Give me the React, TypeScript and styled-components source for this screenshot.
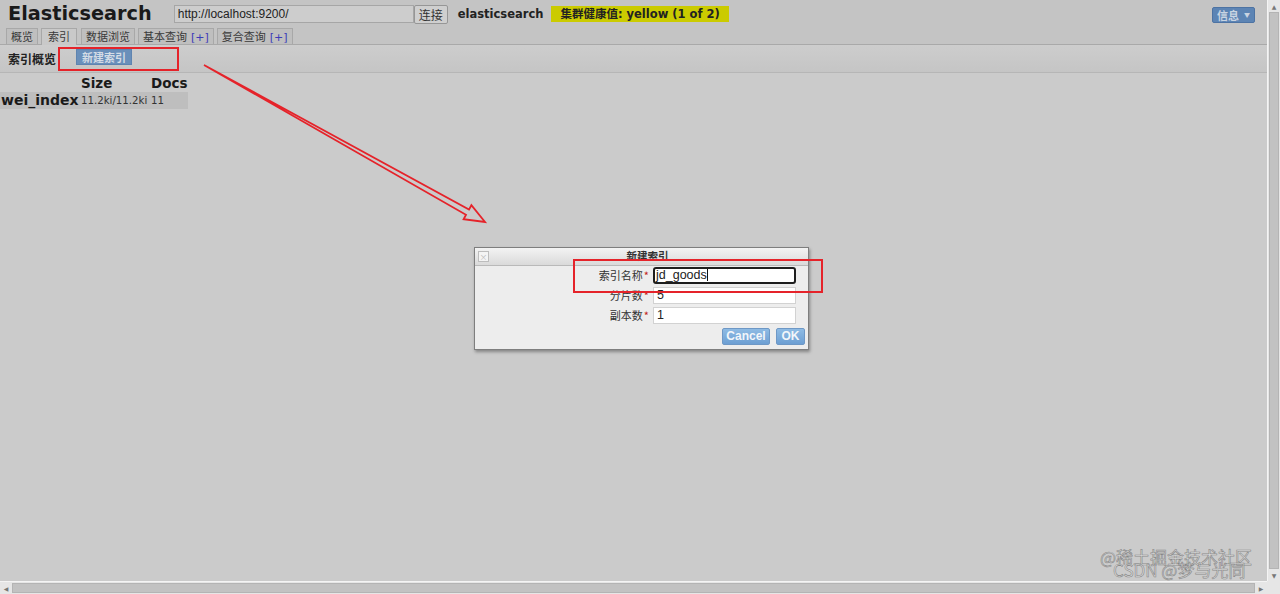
import React from "react";
import styled, { createGlobalStyle } from "styled-components";

const Global = createGlobalStyle`
  html, body { margin: 0; padding: 0; width: 1280px; height: 594px; overflow: hidden; background: #cbcbcb; }
  #root { width: 1280px; height: 594px; }
  * { box-sizing: border-box; }
`;

const Viewport = styled.div`
  position: relative;
  width: 1280px;
  height: 594px;
  display: grid;
  grid-template-columns: 1fr 13px;
  grid-template-rows: 1fr 13px;
  font-family: "DejaVu Sans", Verdana, sans-serif;
  color: #222;
  overflow: hidden;
`;

const Page = styled.div`
  background: #cbcbcb;
  overflow: hidden;
  display: flex;
  flex-direction: column;
`;

const Header = styled.header`
  background: #c4c4c4;
  border-bottom: 1px solid #a9a9a9;
  display: flex;
  flex-direction: column;
  height: 45px;
`;

const TopRow = styled.div`
  height: 28px;
  display: flex;
  align-items: center;
  padding-left: 8px;
  padding-right: 12px;
`;

const Title = styled.h1`
  margin: 0;
  font-size: 19.3px;
  font-weight: bold;
  color: #1a1a1a;
  line-height: 1;
`;

const UrlInput = styled.div`
  margin-left: 22px;
  width: 240px;
  height: 18px;
  background: #cdcdcd;
  border: 1px solid #a6a6a6;
  font-family: "Liberation Sans", Arial, sans-serif;
  font-size: 12px;
  color: #222;
  padding: 1px 3px;
  line-height: 15px;
`;

const ConnectButton = styled.div`
  width: 34px;
  height: 19px;
  background: #cfcfcf;
  border: 1px solid #969696;
  border-radius: 2px;
  font-size: 12px;
  line-height: 17px;
  text-align: center;
  color: #333;
  font-family: "Noto Sans CJK SC", sans-serif;
`;

const ClusterName = styled.span`
  margin-left: 10px;
  font-size: 11.5px;
  font-weight: bold;
  color: #222;
`;

const Health = styled.span`
  margin-left: 8px;
  background: #cbcb00;
  padding: 0 9px;
  height: 16px;
  line-height: 16px;
  font-size: 11.5px;
  font-weight: bold;
  color: #222;
  font-family: "DejaVu Sans", "Noto Sans CJK SC", sans-serif;
`;

const InfoButton = styled.div`
  margin-left: auto;
  margin-top: 2px;
  width: 43px;
  height: 16px;
  background: #5c84b4;
  border: 1px solid #4d73a3;
  border-radius: 2px;
  color: #c9d4e2;
  font-size: 11px;
  font-weight: bold;
  font-family: "Noto Sans CJK SC", sans-serif;
  display: flex;
  align-items: center;
  justify-content: center;
  gap: 5px;
  line-height: 1;
`;

const Caret = styled.span`
  font-size: 6px;
`;

const Tabs = styled.nav`
  display: flex;
  align-items: flex-end;
  gap: 2px;
  padding-left: 6px;
  height: 16px;
  margin-top: auto;
`;

const Tab = styled.div<{ $active?: boolean }>`
  height: ${(p) => (p.$active ? 17 : 16)}px;
  margin-bottom: ${(p) => (p.$active ? -1 : 0)}px;
  padding: 0 ${(p) => (p.$active ? 6 : 4)}px;
  margin-right: ${(p) => (p.$active ? 2 : 1)}px;
  background: ${(p) => (p.$active ? "#c9c9c9" : "#bfbfbf")};
  border: 1px solid #a8a8a8;
  border-bottom: none;
  font-size: 11px;
  line-height: 15px;
  color: #3a3a3a;
  font-family: "Noto Sans CJK SC", sans-serif;
  white-space: nowrap;
`;

const Plus = styled.span`
  color: #3b3bb8;
  font-family: "DejaVu Sans", sans-serif;
  font-size: 11px;
  margin-left: 4px;
`;

const Toolbar = styled.div`
  height: 28px;
  background: linear-gradient(#cdcdcd, #c5c5c5);
  border-bottom: 1px solid #b6b6b6;
  display: flex;
  align-items: center;
  padding-left: 8px;
`;

const ToolbarTitle = styled.span`
  font-size: 12px;
  font-weight: bold;
  font-family: "Noto Sans CJK SC", sans-serif;
  color: #222;
  margin-top: -1px;
`;

const BlueButton = styled.div`
  margin-left: 20px;
  margin-top: -4px;
  width: 56px;
  height: 16px;
  background: #6a8fba;
  border: 1px solid #5f84b0;
  color: #d4dce6;
  font-size: 11px;
  font-weight: bold;
  font-family: "Noto Sans CJK SC", sans-serif;
  text-align: center;
  line-height: 14px;
`;

const IndexTable = styled.table`
  border-collapse: collapse;
  margin-top: 2px;
  width: 188px;
`;

const Th = styled.th<{ $w: number }>`
  width: ${(p) => p.$w}px;
  text-align: left;
  font-size: 13.5px;
  font-weight: bold;
  padding: 0 0 0 1px;
  height: 17px;
  line-height: 17px;
  color: #1a1a1a;
`;

const Row = styled.tr`
  background: #bebebe;
`;

const NameCell = styled.td`
  font-size: 14px;
  font-weight: bold;
  padding: 0 0 0 1px;
  height: 17px;
  line-height: 17px;
  color: #1a1a1a;
`;

const SmallCell = styled.td`
  font-size: 10.2px;
  padding: 0 0 0 1px;
  color: #333;
  white-space: nowrap;
  vertical-align: middle;
`;

const Modal = styled.div`
  position: absolute;
  left: 474px;
  top: 247px;
  width: 335px;
  height: 103px;
  background: #ededed;
  border: 1px solid #7e7e7e;
  box-shadow: 1px 2px 3px rgba(0, 0, 0, 0.35);
  display: flex;
  flex-direction: column;
`;

const ModalTitle = styled.div`
  height: 18px;
  background: linear-gradient(#f3f3f3, #dadada);
  border-bottom: 1px solid #b9b9b9;
  display: flex;
  align-items: center;
  justify-content: center;
  position: relative;
  padding-left: 12px;
  font-size: 10.5px;
  font-weight: bold;
  font-family: "Noto Sans CJK SC", sans-serif;
  color: #333;
  line-height: 1;
`;

const CloseBox = styled.span`
  position: absolute;
  left: 3px;
  top: 3px;
  width: 11px;
  height: 11px;
  border: 1px solid #bdbdbd;
  background: #f4f4f4;
  color: #bbb;
  font-size: 8px;
  line-height: 9px;
  text-align: center;
  font-weight: normal;
`;

const Form = styled.div`
  display: grid;
  grid-template-columns: 174px 143px;
  column-gap: 4px;
  row-gap: 3px;
  padding-top: 1px;
`;

const Label = styled.label`
  text-align: right;
  font-size: 11px;
  font-family: "Noto Sans CJK SC", sans-serif;
  color: #333;
  line-height: 17px;
  height: 17px;
`;

const Star = styled.span`
  color: #c02020;
  margin-left: 1px;
`;

const Field = styled.div<{ $focus?: boolean }>`
  height: 17px;
  background: #fff;
  border: ${(p) => (p.$focus ? "2px solid #1e1e1e" : "1px solid #d2d2d2")};
  border-radius: ${(p) => (p.$focus ? 3 : 0)}px;
  font-family: "Liberation Sans", Arial, sans-serif;
  font-size: 12.5px;
  line-height: ${(p) => (p.$focus ? 13 : 15)}px;
  padding: 0 ${(p) => (p.$focus ? 1 : 3)}px;
  color: #222;
  white-space: nowrap;
`;

const Cursor = styled.span`
  display: inline-block;
  width: 1px;
  height: 12px;
  background: #111;
  vertical-align: -2px;
`;

const ButtonRow = styled.div`
  display: flex;
  justify-content: flex-end;
  gap: 6px;
  padding: 4px 3px 0 0;
`;

const DialogButton = styled.div<{ $w: number }>`
  width: ${(p) => p.$w}px;
  height: 17px;
  background: linear-gradient(#8ebbe4, #6d9fd3);
  border: 1px solid #6e98c6;
  border-radius: 2px;
  color: #f2f6fa;
  font-family: "Liberation Sans", Arial, sans-serif;
  font-size: 12px;
  font-weight: bold;
  text-align: center;
  line-height: 15px;
`;

const RedBox = styled.div<{ $l: number; $t: number; $w: number; $h: number }>`
  position: absolute;
  left: ${(p) => p.$l}px;
  top: ${(p) => p.$t}px;
  width: ${(p) => p.$w}px;
  height: ${(p) => p.$h}px;
  border: 2px solid #e5232a;
  pointer-events: none;
`;

const ArrowSvg = styled.svg`
  position: absolute;
  left: 0;
  top: 0;
  pointer-events: none;
`;

const Watermark = styled.div`
  position: absolute;
  right: 10px;
  bottom: 8px;
  width: 170px;
  height: 38px;
  pointer-events: none;
  font-family: "Noto Sans CJK SC", sans-serif;
  font-size: 17px;
  color: rgba(225, 225, 225, 0.6);
  -webkit-text-stroke: 0.6px rgba(110, 110, 110, 0.75);
  line-height: 1;
`;

const WmLine = styled.div<{ $dx: number; $dy: number }>`
  position: absolute;
  left: ${(p) => p.$dx}px;
  top: ${(p) => p.$dy}px;
  white-space: nowrap;
`;

const VScroll = styled.div`
  background: #e6e6e6;
  border-left: 1px solid #f4f4f4;
  display: flex;
  flex-direction: column;
  align-items: center;
`;

const HScroll = styled.div`
  background: #e6e6e6;
  border-top: 1px solid #f4f4f4;
  display: flex;
  align-items: center;
`;

const Corner = styled.div`
  background: #e6e6e6;
`;

const ArrowBtn = styled.div`
  width: 12px;
  height: 12px;
  display: flex;
  align-items: center;
  justify-content: center;
  flex-shrink: 0;
  color: #777;
  font-size: 6px;
`;

const VThumb = styled.div`
  flex: 1;
  width: 10px;
  background: #c2c2c2;
  border: 1px solid #b4b4b4;
`;

const HThumb = styled.div`
  flex: 1;
  height: 10px;
  background: #c2c2c2;
  border: 1px solid #b4b4b4;
`;

export default function App() {
  return (
    <>
      <Global />
      <Viewport>
        <Page>
          <Header>
            <TopRow>
              <Title>Elasticsearch</Title>
              <UrlInput>http://localhost:9200/</UrlInput>
              <ConnectButton>连接</ConnectButton>
              <ClusterName>elasticsearch</ClusterName>
              <Health>集群健康值: yellow (1 of 2)</Health>
              <InfoButton>
                信息<Caret>▼</Caret>
              </InfoButton>
            </TopRow>
            <Tabs>
              <Tab>概览</Tab>
              <Tab $active>索引</Tab>
              <Tab>数据浏览</Tab>
              <Tab>
                基本查询<Plus>[+]</Plus>
              </Tab>
              <Tab>
                复合查询<Plus>[+]</Plus>
              </Tab>
            </Tabs>
          </Header>
          <Toolbar>
            <ToolbarTitle>索引概览</ToolbarTitle>
            <BlueButton>新建索引</BlueButton>
          </Toolbar>
          <IndexTable>
            <thead>
              <tr>
                <Th $w={80}></Th>
                <Th $w={70}>Size</Th>
                <Th $w={38}>Docs</Th>
              </tr>
            </thead>
            <tbody>
              <Row>
                <NameCell>wei_index</NameCell>
                <SmallCell>11.2ki/11.2ki</SmallCell>
                <SmallCell>11</SmallCell>
              </Row>
            </tbody>
          </IndexTable>
        </Page>
        <VScroll>
          <ArrowBtn>▲</ArrowBtn>
          <VThumb />
          <ArrowBtn>▼</ArrowBtn>
        </VScroll>
        <HScroll>
          <ArrowBtn>◀</ArrowBtn>
          <HThumb />
          <ArrowBtn>▶</ArrowBtn>
        </HScroll>
        <Corner />

        <Modal>
          <ModalTitle>
            <CloseBox>×</CloseBox>
            新建索引
          </ModalTitle>
          <Form>
            <Label>
              索引名称<Star>*</Star>
            </Label>
            <Field $focus>
              jd_goods
              <Cursor />
            </Field>
            <Label>
              分片数<Star>*</Star>
            </Label>
            <Field>5</Field>
            <Label>
              副本数<Star>*</Star>
            </Label>
            <Field>1</Field>
          </Form>
          <ButtonRow>
            <DialogButton $w={48}>Cancel</DialogButton>
            <DialogButton $w={29}>OK</DialogButton>
          </ButtonRow>
        </Modal>

        <RedBox $l={58} $t={47} $w={121} $h={24} />
        <RedBox $l={573} $t={259} $w={250} $h={34} />
        <ArrowSvg width={1280} height={594} viewBox="0 0 1280 594">
          <polygon
            points="204,65 469,209.6 471.4,205.2 485,222 463.6,219.2 466,214.8"
            fill="none"
            stroke="#e5232a"
            strokeWidth={1.8}
            strokeLinejoin="miter"
          />
        </ArrowSvg>

        <Watermark>
          <WmLine $dx={0} $dy={0}>@稀土掘金技术社区</WmLine>
          <WmLine $dx={13} $dy={13}>CSDN @梦与光同</WmLine>
        </Watermark>
      </Viewport>
    </>
  );
}
